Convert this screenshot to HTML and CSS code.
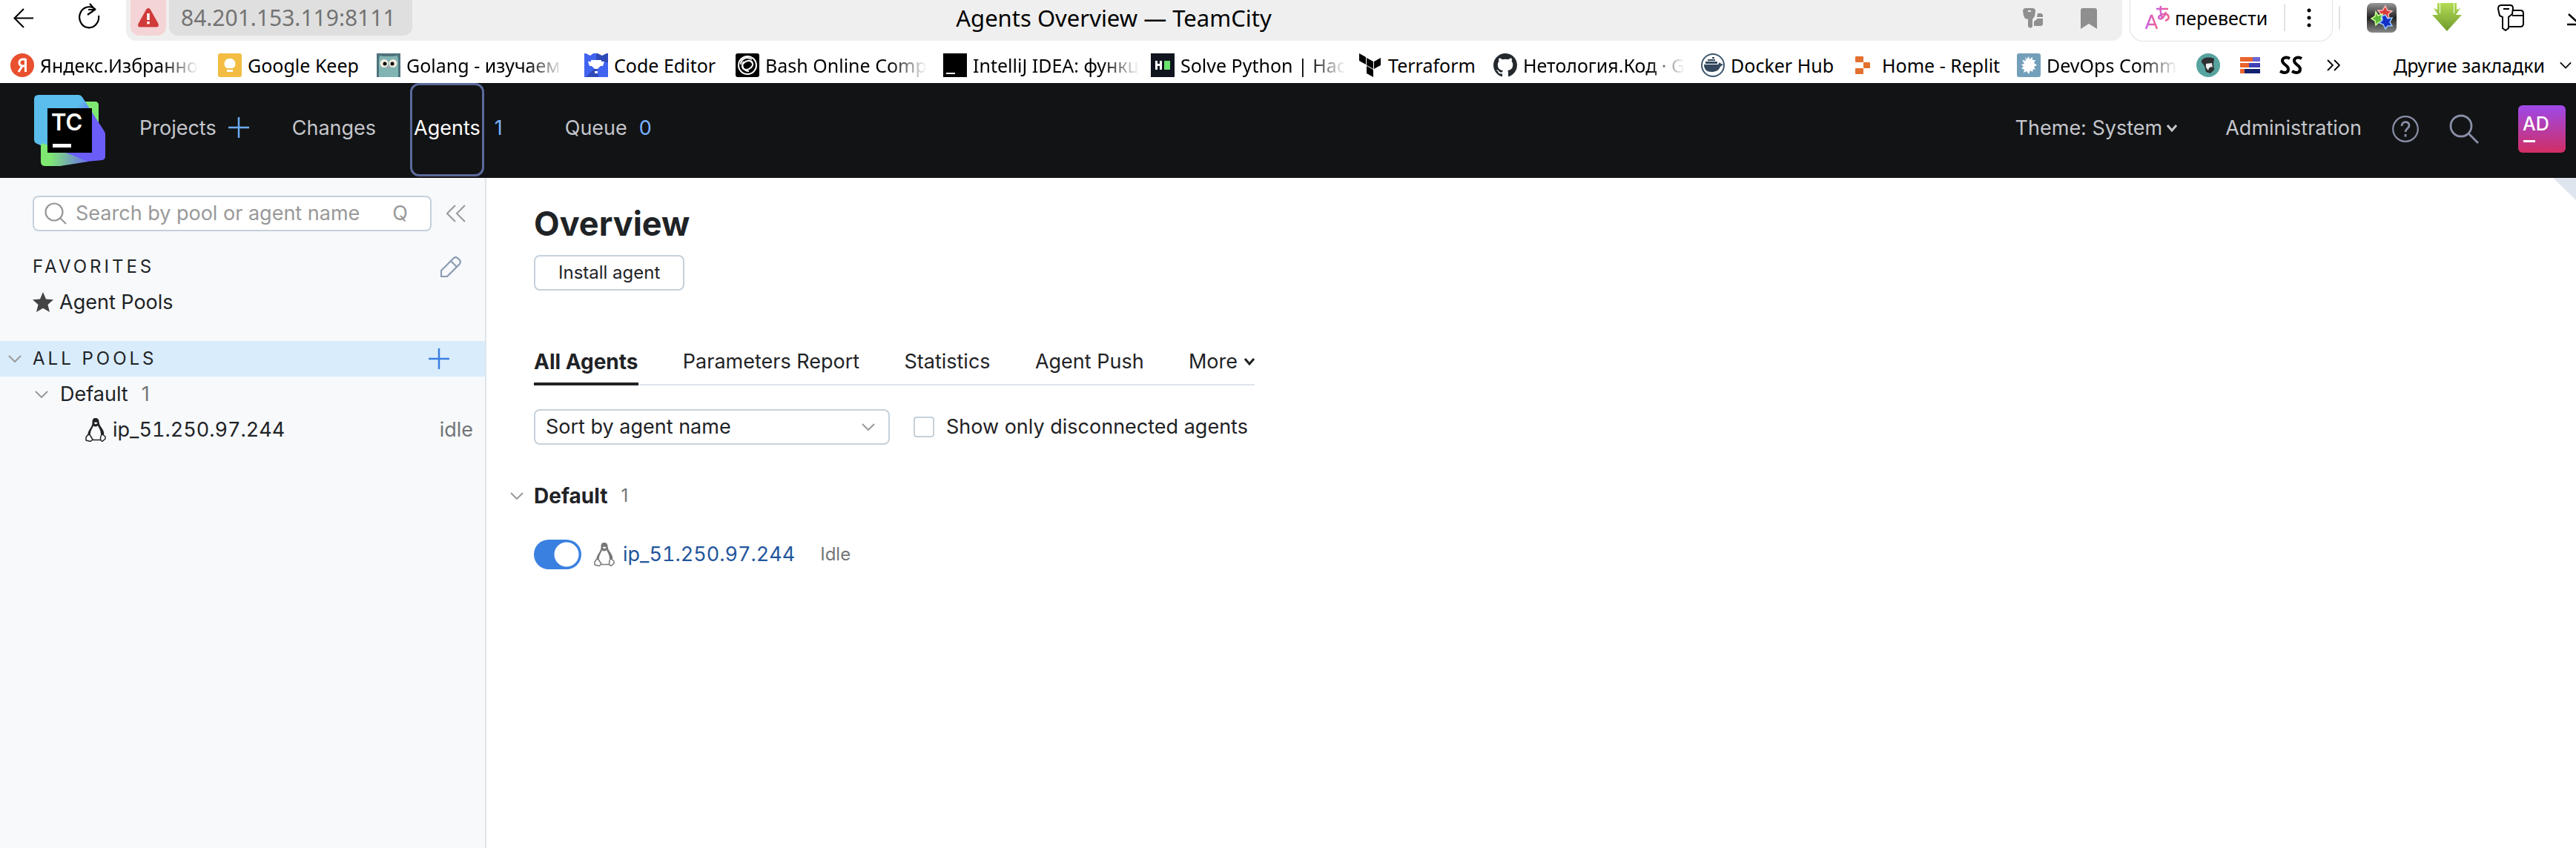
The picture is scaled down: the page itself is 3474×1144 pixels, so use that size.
FILE: index.html
```html
<!DOCTYPE html>
<html lang="en">
<head>
<meta charset="utf-8">
<title>Agents Overview — TeamCity</title>
<link rel="stylesheet" href="styles.css">
</head>
<body>
<svg class="defs" aria-hidden="true">
  <symbol id="chevron" viewBox="0 0 18 10"><path d="M1 1l8 8 8-8" fill="none" stroke="currentColor" stroke-width="2"/></symbol>
  <symbol id="caret" viewBox="0 0 14 10"><path d="M1 1l6 7 6-7" fill="none" stroke="currentColor" stroke-width="3"/></symbol>
  <symbol id="penguin" viewBox="0 0 28 32">
    <path d="M14 0C10.500 0 9.500 2 9.500 5.500C9.500 10 8 12 6 15C4 18 3 21 3.200 25L7 21C7 17 10 13 11 10.500C13 12 15 12 17 10C18 13 21 16 21 22L25 23C26 19 24 16 22 13C19 9 19 7 18.500 4.500C18.200 1.500 17 0 14 0Z" fill="currentColor"/>
    <path d="M11.500 6.500l2.500 2 3-2-3-1z" fill="#fff"/>
    <path d="M3.500 22.500L1 26v4l6 1.500 3-2.500-4-6.500zM22 22c-1 2-2 5-1 8l2 1.500 4-3.500v-3l-3-2.500zM9.500 29.500h11" fill="#fff" stroke="currentColor" stroke-width="1.500" stroke-linejoin="round"/>
  </symbol>
  <symbol id="plus" viewBox="0 0 28 28"><path d="M14 0v28M0 14h28" stroke="currentColor" stroke-width="2.500"/></symbol>
</svg>

<div class="browser">
  <div class="toolbar">
    <button class="icon-button" aria-label="Back"><svg width="28" height="28" viewBox="0 0 28 28"><path d="M27 13.500H2M14 1L1.500 13.500 14 26" fill="none" stroke="#000" stroke-width="2"/></svg></button>
    <button class="icon-button reload" aria-label="Reload"><svg width="30" height="36" viewBox="0 0 30 36"><path d="M27 17a13 14 0 1 1-4-8M15 1l7 8-10 7M23 9H13" fill="none" stroke="#000" stroke-width="2.200"/></svg></button>
    <div class="omnibox">
      <div class="address">
        <button class="warning" aria-label="Not secure"><svg width="30" height="28" viewBox="0 0 30 28"><path d="M15 1c1.500 0 2.500 1 3.500 3l10 18c1 3 0 4.500-2.500 4.500H4C1.500 26.500.500 25 1.500 22l10-18c1-2 2-3 3.500-3z" fill="#d03a3a"/><path d="M15 8v9M15 19v3.500" stroke="#fff" stroke-width="3.500"/></svg></button>
        <span class="url">84.201.153.119:8111</span>
      </div>
      <span class="page-title">Agents Overview — TeamCity</span>
      <div class="omnibox-actions">
        <svg width="28" height="28" viewBox="0 0 28 28" fill="#8f8f8f"><path d="M4 0h9c3 0 4 2 4 4l-1 7-3 4v10l-2.500 2L7 25V15l-4-1-2-4-1-6c0-2 1-4 4-4zm3 3v2h4V3z" fill-rule="evenodd"/><path d="M20 7h5l2 2v3h-8zM15 18l5-4h7v8l-2 2H15z"/></svg>
        <svg width="22" height="28" viewBox="0 0 22 28"><path d="M0 3q0-3 3-3h16q3 0 3 3v25L11 21 0 28z" fill="#8f8f8f"/></svg>
      </div>
    </div>
    <div class="translate">
      <svg width="34" height="32" viewBox="0 0 34 32"><defs><linearGradient id="tr" x1="0" x2="1"><stop stop-color="#c95fe0"/><stop offset="1" stop-color="#ef6090"/></linearGradient></defs><g fill="none" stroke="url(#tr)" stroke-width="2.500"><path d="M1 31L8 13h1l7 18M4 25h10"/><path d="M15 4h16M21 0c-1 6 0 12 2 17M28 8c-2 7-6 11-9 9-4-4 9-9 12-4 2 4-1 6-4 7"/></g></svg>
      <button class="translate-text">перевести</button>
      <button class="translate-menu" aria-label="More"><svg width="6" height="26" viewBox="0 0 6 26"><circle cx="3" cy="3" r="2.500"/><circle cx="3" cy="13" r="2.500"/><circle cx="3" cy="23" r="2.500"/></svg></button>
    </div>
    <div class="extensions">
      <svg width="40" height="40" viewBox="0 0 40 40"><defs><linearGradient id="ex" x2="0" y2="1"><stop stop-color="#999"/><stop offset=".35" stop-color="#444"/><stop offset=".5" stop-color="#222"/><stop offset="1" stop-color="#888"/></linearGradient></defs><rect width="40" height="40" rx="7" fill="url(#ex)"/><path d="M25 4l3 6 6 1-5 4 1 6-6-2-6 2 1-6-4-5h6z" fill="#d93a3a" stroke="#fbb" stroke-width="1.500"/><path d="M12 12l3 5 6-2-2 6 3 4-6 1-4 4-1-6-5-3 5-3z" fill="#5cb83a" stroke="#cf9" stroke-width="1.500"/><path d="M25 16l3 5 6-1-3 6 3 5-6 0-3 4-3-6-5-2 4-4-1-5z" fill="#1530c8" stroke="#9cf" stroke-width="1.500"/></svg>
      <svg width="40" height="40" viewBox="0 0 40 40"><defs><linearGradient id="gr" x2="0" y2="1"><stop stop-color="#b4dc55"/><stop offset="1" stop-color="#6f9a2c"/></linearGradient></defs><path d="M7 0v9L2 7l6 9H0l20 22 20-22h-8l6-9-5 2V0h-3v14h-1V0H11v14h-1V0z" fill="url(#gr)"/></svg>
      <svg width="36" height="36" viewBox="0 0 36 36" fill="none" stroke="#000" stroke-width="2"><path d="M5 1h12c3 0 4 2 4 4l-1 8-5 4v15l-4 3-4-3V17l-4-2L1 6c0-3 1-5 4-5zM8 6h8M21 8h10c3 0 4 2 4 4v14c0 3-1 4-4 4H15M20 15h15"/></svg>
      <svg class="cut" width="32" height="28" viewBox="0 0 32 28" fill="none" stroke="#000" stroke-width="2.500"><path d="M16 0v14M2 1l14 13L30 1M0 15h32"/></svg>
    </div>
  </div>

  <nav class="bookmarks" aria-label="Bookmarks">
    <a href="#" class="long"><svg viewBox="0 0 32 32"><circle cx="16" cy="16" r="16" fill="#e8502f"/><path d="M20.500 7v18M20.500 8h-4c-6 0-6 9 0 9h4M16 17l-5 8" fill="none" stroke="#fff" stroke-width="3"/></svg><span>Яндекс.Избранно</span></a>
    <a href="#"><svg viewBox="0 0 32 32"><rect width="32" height="32" rx="3" fill="#f2bd42"/><path d="M16 7a7 7 0 0 0-4 13h8a7 7 0 0 0-4-13zM12 22h8v3h-8z" fill="#fff"/></svg><span>Google Keep</span></a>
    <a href="#" class="long"><svg viewBox="0 0 32 32"><path fill="#4f737d" d="M0 0h32v32H0z"/><path d="M3 32V8l1-5 5 1h14l5-1 1 5v24z" fill="#82b4b4"/><circle cx="10" cy="13.500" r="5.500" fill="#f3ede0"/><circle cx="22" cy="13.500" r="5.500" fill="#f3ede0"/><circle cx="11" cy="14" r="2.500"/><circle cx="21" cy="14" r="2.500"/><path d="M14 18h4l-2 2z" fill="#e58a9a"/></svg><span>Golang - изучаем</span></a>
    <a href="#"><svg viewBox="0 0 32 32"><path fill="#2f4ab8" d="M0 0h32v32H0z"/><path d="M0 0h16v18L2 32H0zM16 24l10-12h6v20H20z" fill="#4164f0"/><path d="M2 0h10L8 3zM18 0h12l-6 3z" fill="#fff"/><path d="M9 9h14v2h4l-2 6h-3l-4 4h-4l-4-4H7l-2-6h4zM14 24h4v3h-4z" fill="#fff"/></svg><span>Code Editor</span></a>
    <a href="#" class="long"><svg viewBox="0 0 32 32"><rect width="32" height="32" rx="3"/><g fill="none" stroke="#fff" stroke-width="2"><circle cx="16" cy="16" r="12"/><path d="M16 10c7-1 9 5 5 9s-10 4-12-1M22 8c-8-5-15 0-15 7M11 11c-4 6 0 13 7 13M16 22c-7 1-9-5-5-9s10-4 12 1"/></g></svg><span>Bash Online Comp</span></a>
    <a href="#" class="long"><svg viewBox="0 0 32 32"><path d="M0 0h32v32H0z"/><path d="M4 26h12v2H4z" fill="#fff"/></svg><span>IntelliJ IDEA: функц</span></a>
    <a href="#" class="long"><svg viewBox="0 0 32 32"><path d="M0 0h32v32H0z" fill="#0f141e"/><path d="M6 10h3v4h3v-4h3v12h-3v-5H9v5H6z" fill="#fff"/><path d="M18 10h8v12h-8z" fill="#6be36f"/></svg><span>Solve Python | Hac</span></a>
    <a href="#"><svg viewBox="0 0 32 32"><path d="M1 0l9 5v10l-9-5zM11 6l9 5v10l-9-5zM21 11l9-5v10l-9 5zM11 17l9 5v10l-9-5z"/></svg><span>Terraform</span></a>
    <a href="#" class="long"><svg viewBox="0 0 16 16"><path fill="#24292e" d="M8 0C3.580 0 0 3.580 0 8c0 3.540 2.290 6.530 5.470 7.590.4.070.55-.17.55-.38 0-.19-.01-.82-.01-1.490-2.010.37-2.530-.49-2.690-.94-.09-.23-.48-.94-.82-1.130-.28-.15-.68-.52-.01-.53.63-.01 1.080.58 1.230.82.72 1.210 1.870.87 2.330.66.07-.52.28-.87.51-1.070-1.780-.2-3.640-.89-3.640-3.950 0-.87.31-1.590.82-2.150-.08-.2-.36-1.020.08-2.120 0 0 .67-.21 2.200.82.64-.18 1.320-.27 2-.27s1.360.09 2 .27c1.530-1.040 2.200-.82 2.200-.82.44 1.100.16 1.920.08 2.120.51.56.82 1.270.82 2.150 0 3.070-1.870 3.750-3.650 3.950.29.25.54.73.54 1.480 0 1.070-.01 1.930-.01 2.200 0 .21.15.46.55.38A8.010 8.010 0 0 0 16 8c0-4.420-3.580-8-8-8z"/></svg><span>Нетология.Код · G</span></a>
    <a href="#"><svg viewBox="0 0 32 32"><circle cx="16" cy="16" r="15" fill="#fff" stroke="#3c566e" stroke-width="2"/><path d="M4 15h19l2-3 2 2 3 1-4 3c-2 5-6 7-12 7S4 22 4 15zM6 11h16v3H6zM9 8h10v2H9zM15 5h3v2h-3z" fill="#34495e"/></svg><span>Docker Hub</span></a>
    <a href="#"><svg viewBox="0 0 32 32" fill="#e4702f"><rect x="4" y="4" width="11" height="8" rx="1"/><path d="M15 12h8l1 1v7h-9z"/><rect x="4" y="20" width="11" height="8" rx="1"/></svg><span>Home - Replit</span></a>
    <a href="#" class="long"><svg viewBox="0 0 32 32"><rect width="32" height="32" rx="3" fill="#739fbb"/><path d="M11 4l2 4 3-4 1 4 4-3v4h4l-2 4 4 3-4 2 2 4-3-1-1 4-3-2-2 5-3-4-4 2 1-4-4-2 3-2-3-3 4-1-3-5 5 1z" fill="#fff"/></svg><span>DevOps Comm</span></a>
    <a href="#" aria-label="Profile"><svg viewBox="0 0 32 32"><circle cx="16" cy="16" r="16" fill="#57a39f"/><path d="M7 12c-1-6 9-8 17-5l-1 7 1 8-5 5-6-2-2-8z" fill="#2d2f30"/><path d="M13 14l8-1 1 6-2-1-3 2-1 3-3-4z" fill="#eee"/></svg></a>
    <a href="#" aria-label="Books"><svg viewBox="0 0 32 32"><path d="M3 5h18v6H3zM3 13h12v6H3zM3 21h7v6H3z" fill="#ea632c"/><path d="M20 5h10v6H20z" fill="#6a67d3"/><path d="M15 13h15v6H15z" fill="#3f3fb8"/><path d="M9 21h21v6H9z" fill="#13226e"/></svg></a>
    <a href="#" aria-label="SS"><svg viewBox="0 0 32 32" fill="none" stroke="#000" stroke-width="4"><path d="M14 7C9 4 4 6 4 10c0 5 8 6 8 11 0 6-6 6-11 3M30 7c-5-3-10-1-10 3 0 5 8 6 8 11 0 6-6 6-11 3"/></svg></a>
    <button class="overflow" aria-label="More bookmarks"><svg width="18" height="16" viewBox="0 0 18 16"><path d="M1 1l7 7-7 7M10 1l7 7-7 7" fill="none" stroke="#000" stroke-width="1.800"/></svg></button>
    <button class="other">Другие закладки<svg width="16" height="10"><use href="#chevron"/></svg></button>
  </nav>
</div>

<header class="header">
  <a href="#" class="logo" aria-label="TeamCity"><svg width="96" height="96" viewBox="0 0 96 96">
    <defs>
      <linearGradient id="lg1" x1=".2" y1=".25" x2=".9" y2=".8"><stop offset=".3" stop-color="#5bbdec"/><stop offset=".6" stop-color="#6b5df8"/></linearGradient>
      <linearGradient id="lg2" x1="0" x2="1"><stop offset=".2" stop-color="#7fe873"/><stop offset="1" stop-color="#6b6df0"/></linearGradient>
    </defs>
    <path d="M66 9h16q5 0 5 5v30z" fill="#7fe873"/>
    <path d="M6 0h54q3 0 5 3l29 45q2 3 2 5v30q0 4-4 5l-32 3L2 65q-2-2-2-4V6q0-6 6-6z" fill="url(#lg1)"/>
    <path d="M9 68l2-3 62 25-38 6H15q-6 0-6-6z" fill="url(#lg2)"/>
    <path d="M18 18h60v60H18z"/><path d="M25 66h25v5H25z" fill="#fff"/>
    <text x="23" y="48" class="logo-text">TC</text></svg></a>
  <nav class="main-nav">
    <a href="#">Projects</a><button class="add" aria-label="Create project"><svg width="28" height="28"><use href="#plus"/></svg></button>
    <a href="#" class="changes">Changes</a>
    <a href="#" class="current">Agents</a><span class="count">1</span>
    <a href="#" class="queue">Queue</a><span class="count">0</span>
  </nav>
  <div class="user-nav">
    <button class="text-button">Theme: System<svg width="14" height="10"><use href="#caret"/></svg></button>
    <a href="#" class="admin">Administration</a>
    <button class="icon-button" aria-label="Help"><svg width="36" height="36" viewBox="0 0 36 36" fill="none" stroke="#8a8fa8" stroke-width="2.200"><circle cx="18" cy="18" r="16.800"/><path d="M13 14c0-7 10-7 10-1 0 5-5 4-5 9M18 25v3.500" stroke-width="2.800"/></svg></button>
    <button class="icon-button" aria-label="Search"><svg width="40" height="40" viewBox="0 0 40 40" fill="none" stroke="#8a8fa8" stroke-width="2.800"><circle cx="16" cy="16" r="14"/><path d="M26 26l13 13"/></svg></button>
    <button class="avatar" aria-label="Profile AD">AD</button>
  </div>
</header>

<div class="page">
  <aside class="sidebar">
    <div class="search-row">
      <label class="search">
        <svg width="30" height="30" viewBox="0 0 30 30" fill="none" stroke="#999" stroke-width="2.200"><circle cx="13" cy="13" r="11.500"/><path d="M21 21l8 8"/></svg>
        <input type="text" placeholder="Search by pool or agent name" aria-label="Search by pool or agent name">
        <span class="hint">Q</span>
      </label>
      <button class="icon-button" aria-label="Collapse sidebar"><svg width="26" height="24" viewBox="0 0 26 24"><path d="M12 1L1 12l11 11M25 1L14 12l11 11" fill="none" stroke="#999" stroke-width="2"/></svg></button>
    </div>
    <div class="row section favorites"><h2>FAVORITES</h2><button class="icon-button" aria-label="Edit favorites"><svg width="28" height="28" viewBox="0 0 28 28" fill="none" stroke="#8a9ab2" stroke-width="2.200"><path d="M1 27v-8L18 2q3-2 5.500.500l2 2Q28 7 26 10L9 27zM14 6l8 8"/></svg></button></div>
    <a href="#" class="row favorite"><svg width="28" height="28" viewBox="0 0 28 28"><path d="M14 0l4 9.500 10 .8-7.500 6.700L23 27l-9-5.300L5 27l2.500-10L0 10.300l10-.8z" fill="#444"/></svg>Agent Pools</a>
    <div class="row section all-pools"><svg width="18" height="10" class="muted"><use href="#chevron"/></svg><h2>ALL POOLS</h2><button class="icon-button blue" aria-label="Add pool"><svg width="28" height="28"><use href="#plus"/></svg></button></div>
    <a href="#" class="row pool"><svg width="18" height="10" class="muted"><use href="#chevron"/></svg>Default<span class="number">1</span></a>
    <a href="#" class="row agent"><svg width="28" height="32"><use href="#penguin"/></svg><span class="ip">ip_51.250.97.244</span><span class="state">idle</span></a>
  </aside>

  <main class="main">
    <h1>Overview</h1>
    <button class="install">Install agent</button>
    <nav class="tabs">
      <a href="#" class="active">All Agents</a><a href="#">Parameters Report</a><a href="#">Statistics</a><a href="#">Agent Push</a><button>More<svg width="14" height="10"><use href="#caret"/></svg></button>
    </nav>
    <div class="filters">
      <div class="select"><select aria-label="Sort order"><option>Sort by agent name</option></select><svg width="18" height="10" class="muted"><use href="#chevron"/></svg></div>
      <label class="check"><input type="checkbox">Show only disconnected agents</label>
    </div>
    <h3 class="group"><svg width="18" height="10" class="muted"><use href="#chevron"/></svg>Default<span>1</span></h3>
    <div class="agent-line">
      <input type="checkbox" role="switch" class="toggle" aria-label="Agent enabled" checked>
      <svg width="28" height="32" class="os"><use href="#penguin"/></svg>
      <a href="#" class="ip">ip_51.250.97.244</a>
      <span class="idle">Idle</span>
    </div>
    <div class="corner"></div>
  </main>
</div>
</body>
</html>
```
FILE: styles.css
```css
* { box-sizing: border-box; }
body { margin: 0; min-height: 100vh; display: flex; flex-direction: column; background: #fff; color: #1f2326; font: 27px/32px Inter, "Liberation Sans", sans-serif; overflow-x: hidden; }
a { color: inherit; text-decoration: none; }
button { padding: 0; border: 0; background: none; color: inherit; font: inherit; }
h1, h2, h3 { margin: 0; }
svg { display: block; flex: none; }
.defs { position: absolute; width: 0; height: 0; }
.icon-button { display: flex; flex: none; }
.muted { color: #999; }
.ip { font-variant-numeric: tabular-nums; }

/* browser chrome */
.browser { font-family: "Noto Sans", "Liberation Sans", sans-serif; color: #000; }
.toolbar { display: flex; height: 56px; padding-left: 18px; overflow: hidden; }
.toolbar > .icon-button { height: 50px; align-items: center; }
.toolbar > .reload { height: 44px; margin: 0 34px 0 60px; }
.omnibox { flex: 1; display: flex; height: 55px; padding: 0 14px 0 6px; background: #efefef; border-radius: 0 0 14px 14px; }
.address, .omnibox-actions { flex: 1; display: flex; }
.address { gap: 4px; }
.warning { display: flex; width: 48px; height: 48px; align-items: center; justify-content: center; background: #f4d4d6; border-radius: 0 0 12px 12px; }
.url { height: 48px; padding: 0 22px 0 16px; background: #dfdfdf; border-radius: 0 0 12px 12px; color: #737373; font-size: 30px; line-height: 48px; }
.page-title { font-size: 31px; line-height: 48px; }
.omnibox-actions { justify-content: flex-end; gap: 50px; align-items: center; padding: 0 20px 6px 0; }
.translate { display: flex; height: 56px; width: 274px; margin-left: 10px; padding: 0 0 8px 20px; border: 1px solid #e2e2e2; border-top: 0; border-radius: 0 0 18px 18px; align-items: center; gap: 6px; }
.translate-text { font-size: 25px; }
.translate-menu { flex: 1; height: 36px; margin-left: 16px; border-left: 2px solid #e2e2e2; display: flex; align-items: center; justify-content: center; }
.extensions { display: flex; align-items: center; gap: 48px; width: 320px; height: 32px; margin: 8px 0 0 8px; padding-left: 36px; border-left: 2px solid #e2e2e2; }
.cut { margin: 16px 0 0 10px; }

.bookmarks { display: grid; grid-template-columns: 252px 186px 252px 176px 252px 252px 252px 154px 252px 176px 194px 214px 28px 28px 36px 18px 1fr; column-gap: 28px; height: 56px; padding: 8px 6px 0 14px; align-items: center; font-size: 25px; }
.bookmarks > a { display: flex; gap: 8px; align-items: center; white-space: nowrap; }
.bookmarks > a > svg { width: 32px; height: 32px; }
.long > span { flex: 1; mask-image: linear-gradient(90deg, #000 calc(100% - 50px), transparent); }
.other { display: flex; justify-content: flex-end; align-items: center; gap: 20px; white-space: nowrap; }

/* application header */
.header { display: flex; align-items: center; height: 128px; padding: 0 14px 0 46px; background: #121314; color: #c4c6cc; }
.main-nav { display: flex; align-self: flex-start; margin-left: 46px; line-height: 122px; }
.add { display: flex; width: 28px; height: 120px; margin-left: 16px; align-items: center; color: #6cabf7; }
.changes { margin-left: 58px; }
.current { height: 126px; margin-left: 46px; padding: 0 2px; border: 3px solid #5a6a9c; border-radius: 12px; color: #fff; line-height: 116px; }
.queue { margin-left: 84px; }
.count { margin-left: 16px; color: #78b2ff; }
.current + .count { margin-left: 14px; }
.user-nav { display: flex; align-items: center; gap: 41px; margin-left: auto; padding-bottom: 4px; }
.text-button { display: flex; align-items: center; gap: 6px; }
.admin { margin-left: 24px; }
.text-button, .admin { padding-bottom: 2px; }
.avatar { width: 64px; height: 64px; margin-left: 12px; padding: 0 0 14px 6px; border-radius: 6px; background: linear-gradient(#fff, #fff) 7px 47px / 16px 3px no-repeat, linear-gradient(#9d49ea, #d12e63); color: #fff; font-size: 25px; font-weight: 500; text-align: left; }
.logo-text { font: 600 31px Inter, sans-serif; fill: #fff; }

/* pools sidebar */
.page { flex: 1; display: flex; }
.sidebar { flex: none; width: 656px; padding-top: 24px; border-right: 2px solid #dfe5eb; background: #f7f9fb; }
.search-row { display: flex; align-items: center; gap: 20px; margin-left: 44px; }
.search { display: flex; align-items: center; width: 538px; height: 48px; padding: 0 30px 0 14px; border: 2px solid #c5d1db; border-radius: 8px; background: #fff; color: #999; }
.search input { flex: 1; min-width: 0; margin-left: 12px; padding: 0; border: 0; outline: 0; background: none; font: inherit; }
.search input::placeholder { color: #999; }
.row { display: flex; align-items: center; height: 48px; padding-left: 44px; }
.section h2 { flex: 1; font-size: 24px; font-weight: 400; letter-spacing: 4px; }
.favorites { margin-top: 24px; padding-right: 32px; }
.favorite { gap: 8px; }
.all-pools { margin-top: 28px; padding: 0 48px 0 11px; gap: 15px; background: #d9ecfc; }
.blue { color: #3a7fe0; }
.pool { padding-left: 47px; gap: 16px; }
.number, .state { color: #737577; }
.number { margin-left: 2px; }
.agent { padding: 0 16px 0 115px; gap: 9px; }
.state { margin-left: auto; }

/* overview */
.main { position: relative; flex: 1; display: flex; flex-direction: column; align-items: flex-start; padding: 34px 64px; }
h1 { font-size: 45px; line-height: 56px; font-weight: 700; }
.install { height: 48px; margin-top: 14px; padding: 0 31px; border: 2px solid #c5d1db; border-radius: 8px; font-size: 24px; }
.tabs { display: flex; justify-content: space-between; width: 972px; margin-top: 56px; box-shadow: inset 0 -2px #dfe5eb; }
.tabs > * { padding: 24px 0 12px; border-bottom: 4px solid transparent; }
.tabs > .active { border-color: #1f2326; font-size: 28px; font-weight: 700; }
.tabs > button { display: flex; align-items: center; gap: 9px; }
.filters { display: flex; align-items: center; gap: 32px; margin-top: 32px; }
.select { display: grid; align-items: center; width: 480px; }
.select > * { grid-area: 1 / 1; }
.select select { height: 48px; padding: 0 14px; border: 2px solid #c5d1db; border-radius: 8px; background: #fff; appearance: none; color: inherit; font: inherit; }
.select svg { justify-self: end; margin-right: 20px; pointer-events: none; }
.check { display: flex; align-items: center; gap: 16px; }
.check input { width: 28px; height: 28px; margin: 0; border: 2px solid #c5d1db; border-radius: 4px; appearance: none; }
.group { display: flex; align-items: center; gap: 14px; margin: 52px 0 0 -32px; font-size: 28px; line-height: 34px; }
.group span { margin-left: 4px; color: #737577; font-size: 24px; font-weight: 400; }
.agent-line { display: flex; align-items: center; margin-top: 42px; }
.toggle { width: 64px; height: 40px; margin: 0 17px 0 0; border-radius: 20px; appearance: none; background: radial-gradient(circle at 44px 20px, #fff 16px, #3a80e0 17px); }
.os { margin-right: 11px; color: #777; }
.agent-line a { color: #23569c; }
.idle { margin-left: 34px; color: #737577; font-size: 24px; }
.corner { position: absolute; top: 0; right: 0; width: 31px; height: 30px; background: #dfe5ee; clip-path: polygon(0 0, 100% 0, 100% 100%); }
```
